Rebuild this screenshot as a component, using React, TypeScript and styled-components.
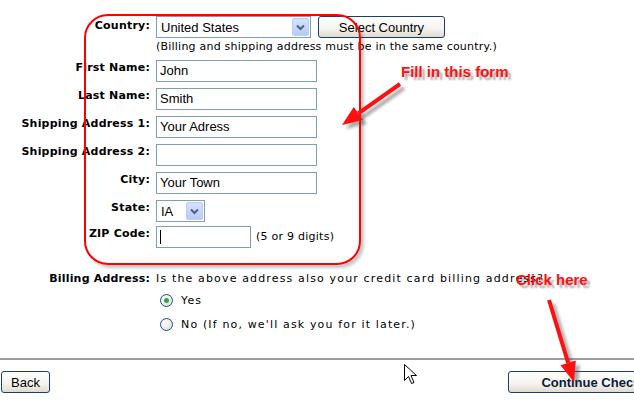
import React from "react";
import styled, { createGlobalStyle } from "styled-components";

const GlobalStyle = createGlobalStyle`
  html, body {
    margin: 0;
    padding: 0;
    background: #ffffff;
  }
  body {
    font-family: "DejaVu Sans", Verdana, sans-serif;
    color: #000;
  }
`;

const Page = styled.div`
  position: relative;
  width: 634px;
  height: 402px;
  overflow: hidden;
  background: #fff;
`;

const FormSection = styled.div`
  padding-top: 16px;
`;

const FieldRow = styled.div<{ $gap?: number }>`
  display: grid;
  grid-template-columns: 150px auto;
  column-gap: 6px;
  align-items: start;
  margin-bottom: ${(p) => (p.$gap ?? 6)}px;
`;

const Label = styled.div<{ $pad?: number }>`
  text-align: right;
  font-size: 11px;
  font-weight: bold;
  letter-spacing: 0.2px;
  line-height: 13px;
  padding-top: ${(p) => p.$pad ?? 1}px;
  white-space: nowrap;
`;

const Controls = styled.div`
  display: flex;
  align-items: center;
  gap: 7px;
`;

const Note = styled.div`
  font-size: 11px;
  letter-spacing: 0.22px;
  line-height: 14px;
  white-space: nowrap;
`;

const Hint = styled.span`
  font-size: 11px;
  letter-spacing: 0.25px;
  line-height: 14px;
  margin-left: -2px;
`;

const TextBox = styled.div<{ $w: number }>`
  box-sizing: border-box;
  width: ${(p) => p.$w}px;
  height: 22px;
  border: 1px solid #7f9db9;
  background: #fff;
  font-family: "Liberation Sans", Arial, sans-serif;
  font-size: 13px;
  line-height: 20px;
  padding-left: 3px;
  display: flex;
  align-items: center;
`;

const Caret = styled.span`
  display: inline-block;
  width: 1px;
  height: 14px;
  background: #000;
`;

const SelectBox = styled.div<{ $w: number }>`
  box-sizing: border-box;
  width: ${(p) => p.$w}px;
  height: 22px;
  border: 1px solid #7f9db9;
  background: #fff;
  font-family: "Liberation Sans", Arial, sans-serif;
  font-size: 13px;
  display: flex;
  align-items: center;
  justify-content: space-between;
  padding: 1px 1px 1px 4px;
`;

const DropButton = styled.span`
  box-sizing: border-box;
  width: 17px;
  height: 18px;
  border: 1px solid #b9cdf6;
  border-radius: 2px;
  background: linear-gradient(180deg, #d7e3fd 0%, #b6cbf8 100%);
  display: flex;
  align-items: center;
  justify-content: center;
`;

const XpButton = styled.button<{ $bold?: boolean; $w?: number }>`
  box-sizing: border-box;
  height: 22px;
  ${(p) => (p.$w ? `width: ${p.$w}px;` : "")}
  padding: 0 ${(p) => (p.$bold ? 0 : 9)}px;
  border: 1px solid #1c3d6e;
  border-radius: 3px;
  background: linear-gradient(180deg, #ffffff 0%, #f4f3ee 60%, #dedbce 100%);
  font-family: "Liberation Sans", Arial, sans-serif;
  font-size: 13px;
  font-weight: ${(p) => (p.$bold ? "bold" : "normal")};
  color: ${(p) => (p.$bold ? "#0c1a40" : "#000")};
  white-space: nowrap;
  flex-shrink: 0;
`;

const BillingSection = styled.div`
  margin-top: 23px;
`;

const Question = styled.div`
  font-size: 11px;
  letter-spacing: 1.15px;
  line-height: 13px;
  padding-top: 1px;
  white-space: nowrap;
`;

const RadioRow = styled.label`
  display: flex;
  align-items: center;
  gap: 8px;
  height: 24px;
  padding-left: 4px;
  font-size: 11px;
  letter-spacing: 1.15px;
  white-space: nowrap;
`;

const RadioDot = styled.span<{ $on?: boolean }>`
  box-sizing: border-box;
  width: 13px;
  height: 13px;
  border-radius: 50%;
  border: 1px solid #1c5180;
  background: radial-gradient(circle at 35% 35%, #ffffff 0%, #e6e6df 70%, #d0d0c4 100%);
  display: flex;
  align-items: center;
  justify-content: center;
  &::after {
    content: "";
    width: 5px;
    height: 5px;
    border-radius: 50%;
    background: ${(p) => (p.$on ? "#2fa838" : "transparent")};
  }
`;

const Divider = styled.div`
  margin-top: 22px;
  height: 2px;
  background: #9c9c9c;
`;

const ButtonBar = styled.div`
  display: flex;
  justify-content: space-between;
  padding: 11px 0 0 1px;
  margin-right: -60px;
`;

/* annotation overlays */
const RedFrame = styled.div`
  position: absolute;
  left: 84px;
  top: 14px;
  width: 277px;
  height: 251px;
  box-sizing: border-box;
  border: 2px solid #ff0000;
  border-radius: 24px;
  box-shadow: 3px 3px 3px rgba(0, 0, 0, 0.22);
  pointer-events: none;
`;

const Callout = styled.div<{ $x: number; $y: number }>`
  position: absolute;
  left: ${(p) => p.$x}px;
  top: ${(p) => p.$y}px;
  font-family: "Liberation Sans", Arial, sans-serif;
  font-weight: bold;
  font-size: 15px;
  line-height: 18px;
  color: #ff1010;
  text-shadow: 3px 3px 2px rgba(0, 0, 0, 0.35);
  white-space: nowrap;
`;

const Overlay = styled.svg`
  position: absolute;
  left: 0;
  top: 0;
  pointer-events: none;
`;

const Chevron = () => (
  <svg width="9" height="7" viewBox="0 0 9 7">
    <path d="M1 1.5 L4.5 5 L8 1.5" fill="none" stroke="#4d6185" strokeWidth="2" />
  </svg>
);

const Arrow = ({ x1, y1, x2, y2 }: { x1: number; y1: number; x2: number; y2: number }) => {
  const a = Math.atan2(y2 - y1, x2 - x1);
  const len = 20;
  const half = 8;
  const bx = x2 - Math.cos(a) * len;
  const by = y2 - Math.sin(a) * len;
  const px = -Math.sin(a) * half;
  const py = Math.cos(a) * half;
  const head = `${x2},${y2} ${bx + px},${by + py} ${bx - px},${by - py}`;
  return (
    <>
      <g transform="translate(4 4)" filter="url(#soft)" opacity="0.45">
        <line x1={x1} y1={y1} x2={bx} y2={by} stroke="#444" strokeWidth="4" />
        <polygon points={head} fill="#444" />
      </g>
      <line x1={x1} y1={y1} x2={bx} y2={by} stroke="#ff1010" strokeWidth="4" />
      <polygon points={head} fill="#ff1010" />
    </>
  );
};

const fields: { label: string; value?: string; w: number }[] = [
  { label: "First Name:", value: "John", w: 161 },
  { label: "Last Name:", value: "Smith", w: 161 },
  { label: "Shipping Address 1:", value: "Your Adress", w: 161 },
  { label: "Shipping Address 2:", value: "", w: 161 },
  { label: "City:", value: "Your Town", w: 161 },
];

export default function App() {
  return (
    <Page>
      <GlobalStyle />
      <FormSection>
        <FieldRow $gap={2}>
          <Label $pad={3}>Country:</Label>
          <Controls>
            <SelectBox $w={155}>
              United States
              <DropButton>
                <Chevron />
              </DropButton>
            </SelectBox>
            <XpButton $w={127}>Select Country</XpButton>
          </Controls>
        </FieldRow>
        <FieldRow $gap={6}>
          <span />
          <Note>(Billing and shipping address must be in the same country.)</Note>
        </FieldRow>
        {fields.map((f) => (
          <FieldRow key={f.label}>
            <Label>{f.label}</Label>
            <TextBox $w={f.w}>{f.value}</TextBox>
          </FieldRow>
        ))}
        <FieldRow $gap={4}>
          <Label>State:</Label>
          <SelectBox $w={49}>
            IA
            <DropButton>
              <Chevron />
            </DropButton>
          </SelectBox>
        </FieldRow>
        <FieldRow $gap={0}>
          <Label>ZIP Code:</Label>
          <Controls>
            <TextBox $w={95}>
              <Caret />
            </TextBox>
            <Hint>(5 or 9 digits)</Hint>
          </Controls>
        </FieldRow>
      </FormSection>

      <BillingSection>
        <FieldRow $gap={3}>
          <Label $pad={1}>Billing Address:</Label>
          <Question>Is the above address also your credit card billing address?</Question>
        </FieldRow>
        <FieldRow $gap={0}>
          <span />
          <div>
            <RadioRow>
              <RadioDot $on />
              Yes
            </RadioRow>
            <RadioRow>
              <RadioDot />
              No (If no, we'll ask you for it later.)
            </RadioRow>
          </div>
        </FieldRow>
      </BillingSection>

      <Divider />
      <ButtonBar>
        <XpButton>Back</XpButton>
        <XpButton $bold $w={186}>Continue Checkout</XpButton>
      </ButtonBar>

      <RedFrame />
      <Callout $x={401} $y={63}>Fill in this form</Callout>
      <Callout $x={516} $y={271}>Click here</Callout>

      <Overlay width="634" height="402" viewBox="0 0 634 402">
        <defs>
          <filter id="soft" x="-20%" y="-20%" width="140%" height="140%">
            <feGaussianBlur stdDeviation="1.5" />
          </filter>
        </defs>
        <Arrow x1={400} y1={84} x2={342} y2={125} />
        <Arrow x1={549} y1={300} x2={574} y2={382} />
        <path
          d="M404.5 364.5 L404.5 380.5 L408.5 376.5 L411.5 383.5 L414 382.5 L411 375.5 L416.5 375.5 Z"
          fill="#fff"
          stroke="#000"
          strokeWidth="1"
        />
      </Overlay>
    </Page>
  );
}
